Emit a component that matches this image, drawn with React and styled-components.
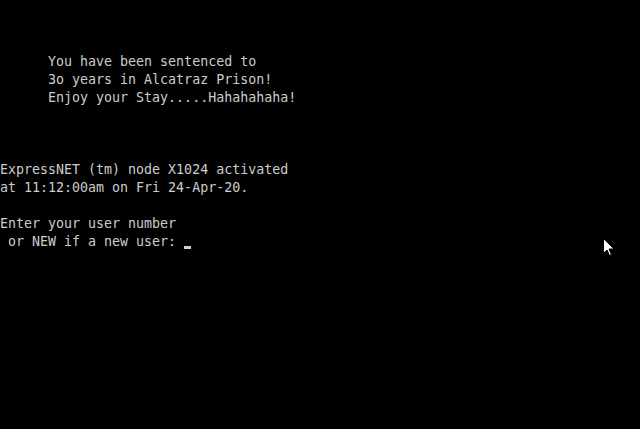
import React from "react";
import styled, { createGlobalStyle } from "styled-components";

const GlobalStyle = createGlobalStyle`
  html, body {
    margin: 0;
    padding: 0;
    background: #000;
  }
`;

const Screen = styled.div`
  position: relative;
  width: 640px;
  height: 429px;
  background: #000;
  overflow: hidden;
`;

const Console = styled.pre`
  margin: 0;
  padding-top: ${props => props.top || 0}px;
  font-family: "DejaVu Sans Mono", "Liberation Mono", monospace;
  font-size: 13.3px;
  line-height: 18px;
  color: #cccccc;
  white-space: pre;
`;

const Block = styled.div`
  margin-top: ${props => props.gap || 0}px;
`;

const Caret = styled.span`
  display: inline-block;
  width: 7px;
  height: 3px;
  background: #d0d0d0;
  vertical-align: -3px;
`;

const Pointer = styled.svg`
  position: absolute;
  left: 603px;
  top: 238px;
`;

const banner = [
  "      You have been sentenced to",
  "      3o years in Alcatraz Prison!",
  "      Enjoy your Stay.....Hahahahaha!",
];

const status = [
  "ExpressNET (tm) node X1024 activated",
  "at 11:12:00am on Fri 24-Apr-20.",
];

function App() {
  return (
    <Screen>
      <GlobalStyle />
      <Console top={53}>
        <Block>{banner.join("\n")}</Block>
        <Block gap={54}>{status.join("\n")}</Block>
        <Block gap={18}>
          {"Enter your user number\n or NEW if a new user: "}
          <Caret />
        </Block>
      </Console>
      <Pointer width="12" height="19" viewBox="0 0 12 19">
        <path
          d="M0.5 0.5 L0.5 15.5 L4 12 L6.5 17.5 L8.5 16.5 L6 11 L11 11 Z"
          fill="#fff"
          stroke="#000"
          strokeWidth="1"
        />
      </Pointer>
    </Screen>
  );
}

export default App;
